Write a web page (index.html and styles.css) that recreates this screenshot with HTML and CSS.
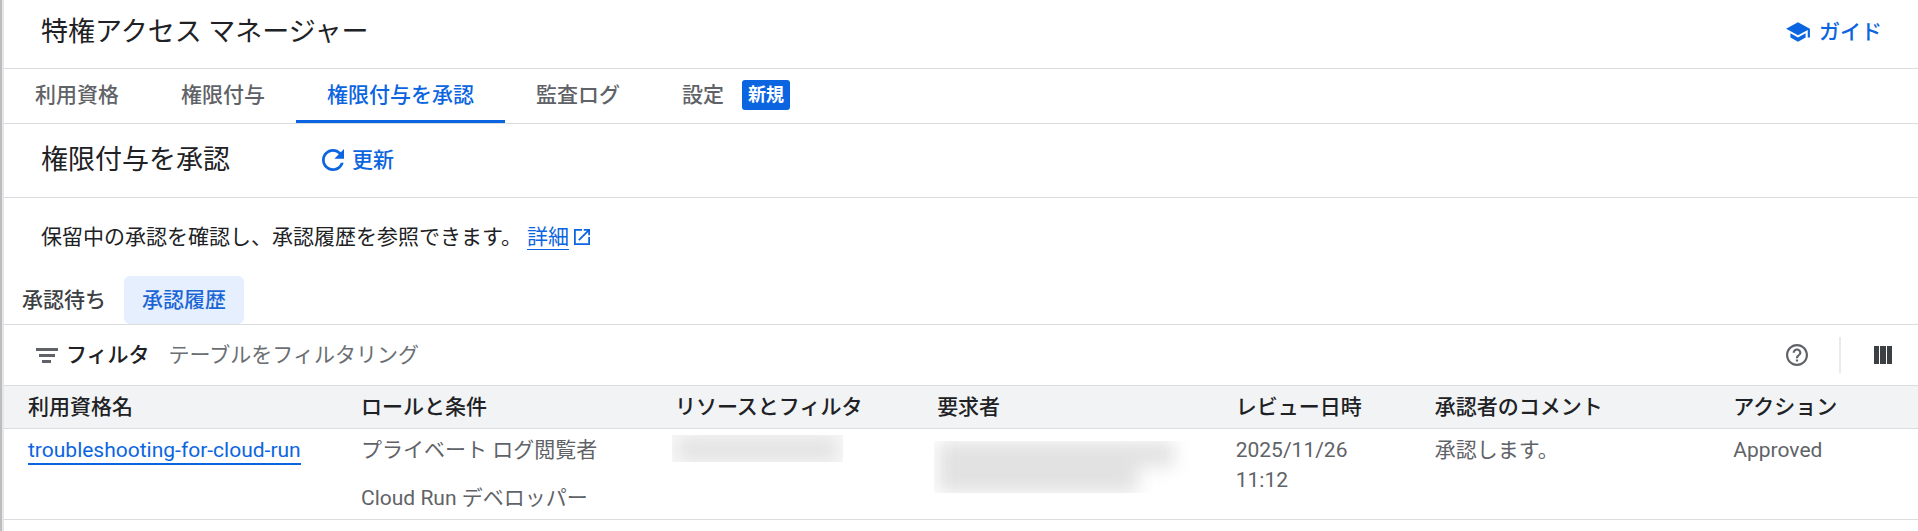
FILE: index.html
```html
<!DOCTYPE html>
<html lang="ja">

<head>
  <meta charset="utf-8">
  <meta name="viewport" content="width=device-width, initial-scale=1.0">
  <title>特権アクセス マネージャー</title>
  <link rel="stylesheet" href="styles.css">
</head>

<body>

<header class="page_header">
  <h1>特権アクセス マネージャー</h1>
  <button type="button" class="text_button">
    <svg class="icon" viewBox="0 0 24 24"><path d="M5 13.18v4L12 21l7-3.82v-4L12 17l-7-3.82zM12 3L1 9l11 6 9-4.91V17h2V9L12 3z"/></svg>
    ガイド
  </button>
</header>

<nav class="tabs">
  <a href="#entitlements">利用資格</a>
  <a href="#grants">権限付与</a>
  <a href="#approve" class="active">権限付与を承認</a>
  <a href="#audit">監査ログ</a>
  <a href="#settings">設定 <span class="badge">新規</span></a>
</nav>

<div class="section_header">
  <h2>権限付与を承認</h2>
  <button type="button" class="text_button">
    <svg class="icon refresh_icon" viewBox="4 4 16 16"><path d="M17.65 6.35C16.2 4.9 14.21 4 12 4c-4.42 0-7.99 3.58-7.99 8s3.57 8 7.99 8c3.73 0 6.84-2.55 7.73-6h-2.08c-.82 2.33-3.04 4-5.65 4-3.31 0-6-2.69-6-6s2.69-6 6-6c1.66 0 3.14.69 4.22 1.78L13 11h7V4l-2.35 2.35z"/></svg>
    更新
  </button>
</div>

<p class="description">
  保留中の承認を確認し、承認履歴を参照できます。
  <a href="#more">詳細</a><svg class="open_icon" viewBox="3 3 18 18"><path d="M19 19H5V5h7V3H3v18h18v-9h-2v7zM14 3v2h3.59l-9.83 9.83 1.41 1.41L19 6.41V10h2V3h-7z"/></svg>
</p>

<div class="sub_tabs">
  <button type="button">承認待ち</button>
  <button type="button" class="selected">承認履歴</button>
</div>

<div class="filter_bar">
  <svg class="filter_icon" viewBox="0 0 22 15"><path d="M0 0h22v3H0zM3 6h16v3H3zM6 12h9v3H6z"/></svg>
  <label for="filter">フィルタ</label>
  <input type="text" id="filter" placeholder="テーブルをフィルタリング">
  <button type="button" class="icon_button" aria-label="ヘルプ">
    <svg class="help_icon" viewBox="2 2 20 20"><path d="M11 18h2v-2h-2v2zm1-16C6.48 2 2 6.48 2 12s4.48 10 10 10 10-4.48 10-10S17.52 2 12 2zm0 18c-4.41 0-8-3.59-8-8s3.59-8 8-8 8 3.59 8 8-3.59 8-8 8zm0-14c-2.21 0-4 1.79-4 4h2c0-1.1.9-2 2-2s2 .9 2 2c0 2-3 1.75-3 5h2c0-2.25 3-2.5 3-5 0-2.21-1.79-4-4-4z"/></svg>
  </button>
  <span class="divider"></span>
  <button type="button" class="icon_button" aria-label="列の表示">
    <svg class="columns_icon" viewBox="0 0 18 18"><path d="M0 0h5v18H0zM6 0h6v18H6zM13 0h5v18h-5z"/></svg>
  </button>
</div>

<table>
  <thead>
    <tr>
      <th class="col_name">利用資格名</th>
      <th class="col_role">ロールと条件</th>
      <th class="col_resource">リソースとフィルタ</th>
      <th class="col_requester">要求者</th>
      <th class="col_date">レビュー日時</th>
      <th class="col_comment">承認者のコメント</th>
      <th>アクション</th>
    </tr>
  </thead>
  <tbody>
    <tr>
      <td><a href="#troubleshooting-for-cloud-run">troubleshooting-for-cloud-run</a></td>
      <td>
        <div class="role">プライベート ログ閲覧者</div>
        <div class="role">Cloud Run デベロッパー</div>
      </td>
      <td><div class="redacted resource"><div class="smudge"><span></span></div></div></td>
      <td><div class="redacted requester"><div class="smudge"><span></span><span></span></div></div></td>
      <td>2025/11/26<br>11:12</td>
      <td>承認します。</td>
      <td>Approved</td>
    </tr>
  </tbody>
</table>

</body>

</html>
```
FILE: styles.css
```css
* {
  box-sizing: border-box;
}

body {
  margin: 0;
  min-height: 100vh;
  padding-left: 2px;
  border-left: 2px solid #bdbdbf;
  box-shadow: inset 2px 0 #e6e6e8;
  background-color: #fff;
  color: #202124;
  font-family: Roboto, "Noto Sans CJK JP", sans-serif;
  font-size: 21px;
  line-height: 30px;
}

a {
  color: #0b65e0;
  text-decoration: none;
}

button {
  border: none;
  padding: 0;
  background: none;
  color: inherit;
  font: inherit;
}

svg {
  fill: currentColor;
  flex: none;
}

h1, h2 {
  margin: 0;
  font-size: 27px;
  font-weight: 400;
  line-height: 36px;
}

.page_header {
  display: flex;
  align-items: center;
  justify-content: space-between;
  height: 69px;
  padding: 0 36px 4px 37px;
  border-bottom: 1px solid #dadce0;
}

.text_button {
  display: flex;
  align-items: center;
  gap: 8px;
  color: #0b65e0;
  font-weight: 500;
}

.icon {
  width: 26px;
  height: 26px;
}

.refresh_icon {
  width: 22px;
  height: 22px;
}

.tabs {
  display: flex;
  height: 55px;
  border-bottom: 1px solid #dadce0;
}

.tabs a {
  display: flex;
  align-items: center;
  padding: 0 31px;
  border-bottom: 3px solid transparent;
  color: #5f6368;
  font-weight: 500;
}

.tabs .active {
  border-color: #0b65e0;
  color: #0b65e0;
}

.badge {
  margin-left: 18px;
  padding: 0 6px;
  border-radius: 3px;
  background-color: #0b65e0;
  color: #fff;
  font-size: 18px;
  font-weight: 700;
}

.section_header {
  display: flex;
  align-items: center;
  gap: 92px;
  height: 74px;
  padding: 0 0 2px 37px;
  border-bottom: 1px solid #dadce0;
}

.description {
  margin: 0;
  padding: 24px 37px;
}

.description a {
  display: inline-block;
  line-height: 24px;
  border-bottom: 1px solid;
}

.open_icon {
  width: 16px;
  height: 16px;
  margin-left: 5px;
  vertical-align: -1px;
  color: #0b65e0;
}

.sub_tabs {
  display: flex;
  border-bottom: 1px solid #dadce0;
}

.sub_tabs button {
  height: 48px;
  padding: 0 18px;
  border-radius: 6px;
  color: #3c4043;
  font-weight: 500;
}

.sub_tabs .selected {
  background-color: #e6effe;
  color: #1a66d6;
}

.filter_bar {
  display: flex;
  align-items: center;
  height: 60px;
  padding: 0 26px 0 32px;
}

.filter_icon {
  width: 22px;
  height: 15px;
  color: #5f6368;
}

.filter_bar label {
  margin: 0 19px 0 8px;
  font-weight: 500;
}

.filter_bar input {
  flex: 1;
  border: none;
  padding: 0;
  outline: none;
  background: none;
  color: inherit;
  font: inherit;
}

.filter_bar input::placeholder {
  color: #6b6f74;
  opacity: 1;
}

.icon_button {
  display: flex;
  color: #5f6368;
}

.help_icon {
  width: 22px;
  height: 22px;
}

.columns_icon {
  width: 18px;
  height: 18px;
  color: #3c4043;
}

.divider {
  width: 2px;
  height: 36px;
  margin: 0 33px 0 31px;
  background-color: #e8eaed;
}

table {
  width: 100%;
  border-collapse: collapse;
  table-layout: fixed;
}

th {
  height: 43px;
  padding: 0 0 0 24px;
  border-top: 1px solid #dadce0;
  border-bottom: 1px solid #dadce0;
  background-color: #f1f3f4;
  font-weight: 500;
  text-align: left;
}

td {
  padding: 6px 0 6px 24px;
  border-bottom: 1px solid #dadce0;
  color: #5f6368;
  vertical-align: top;
}

td a {
  display: inline-block;
  line-height: 26px;
  border-bottom: 2px solid;
}

.col_name { width: 17.4%; }
.col_role { width: 16.4%; }
.col_resource { width: 13.7%; }
.col_requester { width: 15.6%; }
.col_date { width: 10.4%; }
.col_comment { width: 15.6%; }

.role + .role {
  margin-top: 18px;
}

/* hidden values, only a soft grey block is left of them */
.redacted {
  overflow: hidden;
}

.smudge {
  filter: blur(9px);
}

.smudge span {
  display: block;
  background-color: #e2e2e2;
}

.resource {
  width: 171px;
  height: 27px;
  margin-left: -3px;
  padding: 2px 6px;
  background-color: #f8f8f8;
}

.resource span {
  height: 24px;
}

.requester {
  width: 260px;
  height: 52px;
  margin: 6px 0 0 -3px;
  padding-left: 4px;
}

.requester span {
  width: 236px;
  height: 26px;
}

.requester span + span {
  width: 200px;
}
```
